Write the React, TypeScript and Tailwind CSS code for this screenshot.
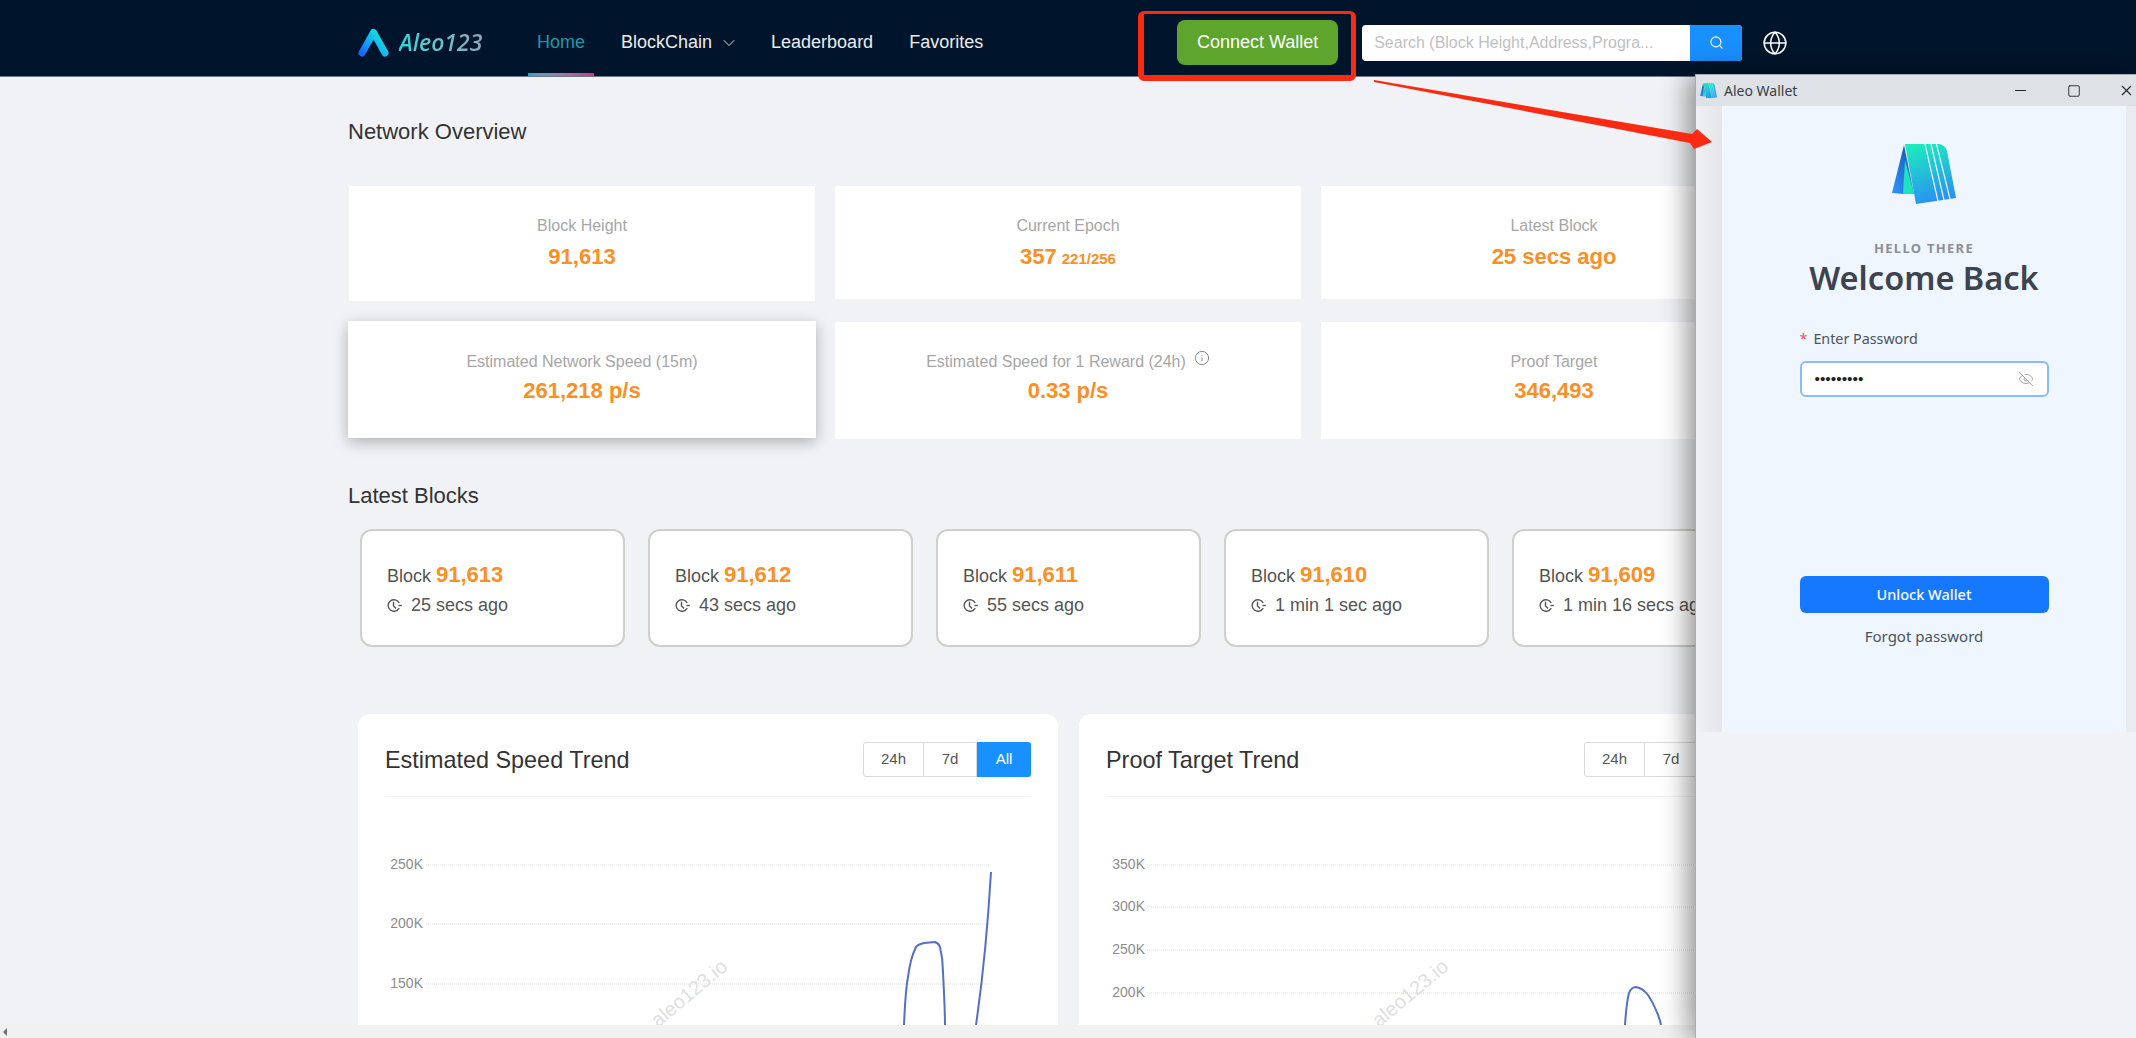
import { ChevronDown, EyeOff, Globe, Info, Minus, Search, Square, X } from 'lucide-react'

const topCards = [
  { label: 'Block Height', value: '91,613', box: 'h-[115px] pt-[28px]', gap: 'mt-[4px]' },
  { label: 'Current Epoch', value: '357', small: '221/256', box: 'h-[113px] pt-[28px]', gap: 'mt-[4px]' },
  { label: 'Latest Block', value: '25 secs ago', box: 'h-[113px] pt-[28px]', gap: 'mt-[4px]' },
  {
    label: 'Estimated Network Speed (15m)',
    value: '261,218 p/s',
    box: 'h-[117px] pt-[29px] -mx-px -mt-px shadow-[0_4px_14px_rgba(0,0,0,0.28)] z-10',
    gap: 'mt-[2px]',
  },
  { label: 'Estimated Speed for 1 Reward (24h)', value: '0.33 p/s', info: true, box: 'h-[117px] pt-[28px]', gap: 'mt-[2px]' },
  { label: 'Proof Target', value: '346,493', box: 'h-[117px] pt-[28px]', gap: 'mt-[2px]' },
]

const blocks = [
  { height: '91,613', time: '25 secs ago' },
  { height: '91,612', time: '43 secs ago' },
  { height: '91,611', time: '55 secs ago' },
  { height: '91,610', time: '1 min 1 sec ago' },
  { height: '91,609', time: '1 min 16 secs ago' },
]

const speedGrid = [
  { y: 68, label: '250K' },
  { y: 127, label: '200K' },
  { y: 187, label: '150K' },
]

const targetGrid = [
  { y: 68, label: '350K' },
  { y: 110, label: '300K' },
  { y: 153, label: '250K' },
  { y: 196, label: '200K' },
]

function SiteLogo() {
  return (
    <svg width="32" height="32" viewBox="0 0 32 32" fill="none">
      <defs>
        <linearGradient id="siteLogo" x1="0" y1="1" x2="1" y2="0.2">
          <stop offset="0" stopColor="#1667ff" />
          <stop offset="0.55" stopColor="#13b8f0" />
          <stop offset="1" stopColor="#12e6e0" />
        </linearGradient>
      </defs>
      <path
        d="M4 26 L15.500 5.500 L27 26"
        stroke="url(#siteLogo)"
        strokeWidth="7"
        strokeLinecap="round"
        strokeLinejoin="round"
      />
    </svg>
  )
}

function WalletLogo({ width, id }: { width: number; id: string }) {
  return (
    <svg width={width} height={(width * 60) / 64} viewBox="0 0 64 60">
      <defs>
        <linearGradient id={`${id}a`} x1="0.35" y1="0" x2="0.6" y2="1">
          <stop offset="0" stopColor="#1de9bd" />
          <stop offset="1" stopColor="#2a8df6" />
        </linearGradient>
        <linearGradient id={`${id}b`} x1="0.8" y1="0" x2="0.2" y2="1">
          <stop offset="0" stopColor="#1458b8" />
          <stop offset="1" stopColor="#2d8ff5" />
        </linearGradient>
      </defs>
      <path d="M12 1 L0 49 L11 50 L22 50 Z" fill={`url(#${id}b)`} />
      <path d="M13 16 L11 50 L22 50 Z" fill="#1de2c0" />
      <path d="M13 0 L47 0 Q53 1 55 7 L64 54 L24 60 Z" fill={`url(#${id}a)`} />
      <path d="M33 0 L46 57 M39 0 L52 56 M44.500 0 L58 55" stroke="#eff6ff" strokeWidth="1.2" />
    </svg>
  )
}

function BlockClock() {
  return (
    <svg width="15" height="15" viewBox="0 0 15 15" fill="none" stroke="#555" strokeWidth="1.4">
      <path d="M12.200 5 A5.800 5.800 0 1 0 12.200 10" />
      <path d="M6.500 3.800 V8 L9 10.500" />
      <path d="M11.500 7.500 H14.800" />
    </svg>
  )
}

function StatCard({ card }: { card: (typeof topCards)[number] }) {
  return (
    <div className={`relative bg-white text-center ${card.box}`}>
      <div className="flex h-[24px] items-center justify-center gap-[8px] text-[16px] text-[#a6a6a6]">
        {card.label}
        {card.info && <Info size={16} strokeWidth={1.3} className="-mt-[8px] text-[#777]" />}
      </div>
      <div className={`h-[30px] text-[22px] leading-[30px] font-bold text-[#fa8f26] ${card.gap}`}>
        {card.value}
        {card.small && <span className="ml-[5px] text-[15px]">{card.small}</span>}
      </div>
    </div>
  )
}

function BlockCard({ height, time }: { height: string; time: string }) {
  return (
    <div className="h-[118px] w-[265px] shrink-0 rounded-[12px] border-2 border-[#cfcfcb] bg-white pt-[29px] pl-[25px]">
      <div className="h-[30px] whitespace-nowrap text-[18px] leading-[30px] text-[#555]">
        Block <span className="text-[22px] font-bold text-[#fa8f26]">{height}</span>
      </div>
      <div className="flex h-[30px] items-center gap-[9px] whitespace-nowrap text-[18px] text-[#555]">
        <BlockClock />
        {time}
      </div>
    </div>
  )
}

function ChartCard({
  title,
  grid,
  labelEnd,
  lineEnd,
  lines,
}: {
  title: string
  grid: { y: number; label: string }[]
  labelEnd: number
  lineEnd: number
  lines: string[]
}) {
  return (
    <div className="h-[340px] w-[700px] shrink-0 rounded-[12px] bg-white px-[27px] pt-[28px]">
      <div className="flex items-center justify-between border-b border-[#f0f0f0] pb-[19px]">
        <div className="relative top-px text-[23.4px] leading-[35px] text-[#333]">{title}</div>
        <div className="flex h-[35px] text-[15px] text-[#555]">
          <div className="flex w-[61px] items-center justify-center rounded-l-[3px] border border-[#d9d9d9] bg-white">24h</div>
          <div className="flex w-[53px] items-center justify-center border-y border-r border-[#d9d9d9] bg-white">7d</div>
          <div className="flex w-[54px] items-center justify-center rounded-r-[3px] bg-[#1890ff] text-white">All</div>
        </div>
      </div>
      <svg width="700" height="228" viewBox="0 0 700 228" className="-ml-[27px] block">
        <text
          x="0"
          y="0"
          transform="translate(300 231) rotate(-40)"
          fontSize="20"
          fontFamily="'Liberation Sans', sans-serif"
          fill="#dfdfdf"
        >
          aleo123.io
        </text>
        {grid.map((g) => (
          <g key={g.label}>
            <line x1="68" x2={lineEnd} y1={g.y} y2={g.y} stroke="#dcdcdc" strokeDasharray="1 1" />
            <text x={labelEnd} y={g.y + 4} textAnchor="end" fontSize="14" fill="#8c8c8c" fontFamily="'Liberation Sans', sans-serif">
              {g.label}
            </text>
          </g>
        ))}
        {lines.map((d) => (
          <path key={d} d={d} fill="none" stroke="#5470c6" strokeWidth="2" />
        ))}
      </svg>
    </div>
  )
}

function WalletWindow() {
  return (
    <div className="absolute top-[74px] right-0 bottom-0 left-[1695px] z-20 flex flex-col border-t border-l border-[#a9adb3] bg-[#f0f2f5] font-['Noto_Sans','Open_Sans',sans-serif] shadow-[-6px_0_26px_rgba(0,0,0,0.45)]">
      <div className="flex h-[31px] shrink-0 items-center justify-between bg-[#dee1e6] pl-[4px] text-[14px] text-[#3a3f47]">
        <div className="flex items-center gap-[7px]">
          <WalletLogo width={17} id="tb" />
          Aleo Wallet
        </div>
        <div className="flex items-center gap-[36px] pr-px text-[#222]">
          <Minus size={17} strokeWidth={1.5} />
          <Square size={14} strokeWidth={1.5} className="mx-[1.500px]" />
          <X size={17} strokeWidth={1.5} />
        </div>
      </div>
      <div className="flex h-[626px] shrink-0">
        <div className="w-[26px] bg-linear-to-r from-[#eef0f3] to-[#e4e6ea]" />
        <div className="flex w-[404px] flex-col items-center bg-[#eff6ff] pt-[38px]">
          <WalletLogo width={64} id="main" />
          <div className="mt-[35px] h-[19px] text-[13px] leading-[19px] font-bold tracking-[1.3px] text-[#8a8f98]">HELLO THERE</div>
          <div className="h-[40px] text-[32.5px] leading-[40px] font-semibold text-[#3d4450]">Welcome Back</div>
          <div className="mt-[31px] w-[249px]">
            <div className="flex h-[20px] items-center text-[14.3px] text-[#4a5360]">
              <span className="mr-[6px] text-[#ff4d4f]">*</span>
              Enter Password
            </div>
            <div className="mt-[12px] flex h-[36px] items-center justify-between rounded-[6px] border-2 border-[#86bcff] bg-white pr-[13px] pl-[13px]">
              <span className="font-['Liberation_Sans',sans-serif] text-[15.500px] leading-none text-[#222]">•••••••••</span>
              <EyeOff size={16} strokeWidth={1.3} className="text-[#999]" />
            </div>
            <div className="mt-[179px] flex h-[37px] items-center justify-center rounded-[6px] bg-[#1677ff] text-[14.500px] font-medium text-white">
              Unlock Wallet
            </div>
            <div className="mt-[13px] h-[20px] text-center text-[15px] leading-[20px] text-[#4a5360]">Forgot password</div>
          </div>
        </div>
        <div className="flex-1 bg-[#e9ebee]" />
      </div>
    </div>
  )
}

export default function App() {
  return (
    <div className="relative h-[1038px] w-[2136px] overflow-hidden bg-[#f0f2f5] font-['Liberation_Sans',Arial,sans-serif]">
      {/* Header */}
      <header className="flex h-[77px] items-center border-b border-[#6f7b8a] bg-[#00152b] pt-[9px] pl-[358px]">
        <SiteLogo />
        <span className="ml-[9px] w-[86px] bg-linear-to-r from-[#17d8de] to-[#8fa8ba] bg-clip-text font-['Open_Sans',sans-serif] text-[23px] font-semibold whitespace-nowrap text-transparent italic">
          Aleo123
        </span>
        <nav className="ml-[43px] flex h-full items-center text-[18px] text-[#ececec]">
          <div className="relative flex h-full w-[66px] items-center justify-center text-[#1f97a8]">
            Home
            <div className="absolute right-0 bottom-0 left-0 h-[3px] bg-linear-to-r from-[#14a8b8] to-[#c8348c]" />
          </div>
          <div className="ml-[27px] flex items-center gap-[7px]">
            BlockChain
            <ChevronDown size={20} strokeWidth={1.1} />
          </div>
          <div className="ml-[32px]">Leaderboard</div>
          <div className="ml-[36px]">Favorites</div>
        </nav>
        <div className="relative ml-[194px] flex h-[45px] w-[161px] items-center justify-center rounded-[8px] bg-[#5da52c] text-[18px] text-white">
          Connect Wallet
          <div className="absolute -top-[9px] -right-[18px] -bottom-[16px] -left-[39px] rounded-[6px] border-t-[3px] border-r-[5px] border-b-[6px] border-l-[6px] border-[#fa2b12]" />
        </div>
        <div className="ml-[24px] flex h-[36px] w-[380px] overflow-hidden rounded-[4px] bg-white">
          <div className="flex-1 pl-[12px] text-[16px] leading-[36px] text-[#bfbfbf]">Search (Block Height,Address,Progra...</div>
          <div className="flex w-[52px] items-center justify-center bg-[#1890ff] text-white">
            <Search size={15} strokeWidth={1.8} />
          </div>
        </div>
        <Globe size={26} strokeWidth={1.4} className="ml-[20px] text-white" />
      </header>

      {/* Page */}
      <main className="h-[948px] overflow-hidden pl-[349px]">
        <h2 className="mt-[40px] -ml-px h-[30px] text-[22px] leading-[30px] text-[#333]">Network Overview</h2>
        <div className="mt-[39px] grid grid-cols-[466px_466px_466px] items-start gap-x-[20px] gap-y-[21px]">
          {topCards.map((card) => (
            <StatCard key={card.label} card={card} />
          ))}
        </div>

        <h2 className="mt-[42px] -ml-px h-[30px] text-[22px] leading-[30px] text-[#333]">Latest Blocks</h2>
        <div className="mt-[18px] ml-[11px] flex gap-[23px]">
          {blocks.map((b) => (
            <BlockCard key={b.height} height={b.height} time={b.time} />
          ))}
        </div>

        <div className="mt-[67px] ml-[9px] flex gap-[21px]">
          <ChartCard
            title="Estimated Speed Trend"
            grid={speedGrid}
            labelEnd={65}
            lineEnd={632}
            lines={[
              'M546 228 C547 205 548 190 550 180 C551 172 553 160 558 150 C560 147 562 147 566 146 L577 145 C580 146 581 147 582 150 C584 158 585 165 585 175 C586 195 587 215 587 228',
              'M618 228 C622 200 628 160 633 75',
            ]}
          />
          <ChartCard
            title="Proof Target Trend"
            grid={targetGrid}
            labelEnd={66}
            lineEnd={700}
            lines={['M546 228 C547 212 548 204 550 196 C552 191 554 190 557 190 C562 191 566 194 569 198 C573 204 575 208 577 213 C579 218 581 222 582 228']}
          />
        </div>
      </main>

      {/* Scrollbar strip */}
      <div className="relative flex h-[13px] items-center bg-[#f1f1f1] pl-[3px]">
        <div className="h-0 w-0 border-y-[4px] border-r-[4px] border-y-transparent border-r-[#707070]" />
      </div>

      <WalletWindow />

      {/* Annotation arrow */}
      <svg className="pointer-events-none absolute top-0 left-0 z-30" width="2136" height="200" viewBox="0 0 2136 200">
        <polygon points="1374,80 1692,134 1697,129 1712,142 1694,149 1690,143 1374,82" fill="#fa2b12" />
      </svg>
    </div>
  )
}
